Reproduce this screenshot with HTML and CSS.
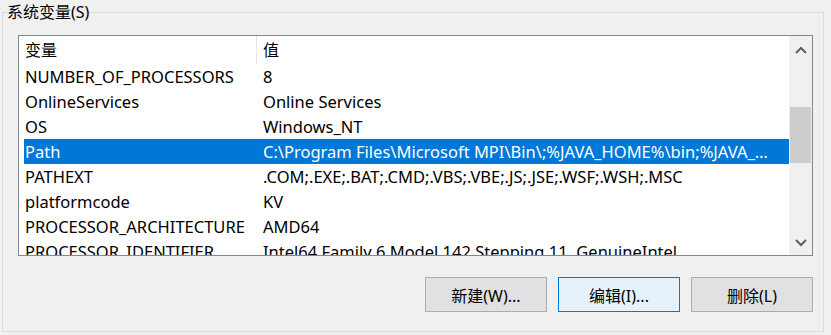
FILE: index.html
```html
<!DOCTYPE html>
<html lang="zh-CN">
<head>
<meta charset="utf-8">
<title>系统变量</title>
<link rel="stylesheet" href="styles.css">
</head>
<body>
<fieldset class="group">
  <legend class="group-title">系统变量(S)</legend>
  <div class="listbox">
    <div class="list">
      <div class="row header">
        <div class="c1">变量</div>
        <div class="c2">值</div>
      </div>
      <div class="row"><div class="c1">NUMBER_OF_PROCESSORS</div><div class="c2">8</div></div>
      <div class="row"><div class="c1">OnlineServices</div><div class="c2">Online Services</div></div>
      <div class="row"><div class="c1">OS</div><div class="c2">Windows_NT</div></div>
      <div class="row selected"><div class="c1">Path</div><div class="c2">C:\Program Files\Microsoft MPI\Bin\;%JAVA_HOME%\bin;%JAVA_HOME%\jre\bin;C:\Windows\system32</div></div>
      <div class="row"><div class="c1">PATHEXT</div><div class="c2">.COM;.EXE;.BAT;.CMD;.VBS;.VBE;.JS;.JSE;.WSF;.WSH;.MSC</div></div>
      <div class="row"><div class="c1">platformcode</div><div class="c2">KV</div></div>
      <div class="row"><div class="c1">PROCESSOR_ARCHITECTURE</div><div class="c2">AMD64</div></div>
      <div class="row"><div class="c1">PROCESSOR_IDENTIFIER</div><div class="c2">Intel64 Family 6 Model 142 Stepping 11, GenuineIntel</div></div>
    </div>
    <div class="scrollbar">
      <div class="arrow">
        <svg width="12" height="8" viewBox="0 0 12 8"><path d="M1 7 L6 2 L11 7" fill="none" stroke="#606060" stroke-width="2"/></svg>
      </div>
      <div class="track">
        <div class="thumb"></div>
      </div>
      <div class="arrow">
        <svg width="12" height="8" viewBox="0 0 12 8"><path d="M1 1 L6 6 L11 1" fill="none" stroke="#606060" stroke-width="2"/></svg>
      </div>
    </div>
  </div>
  <div class="buttons">
    <button class="btn">新建(W)...</button>
    <button class="btn default">编辑(I)...</button>
    <button class="btn">删除(L)</button>
  </div>
</fieldset>
</body>
</html>
```

FILE: styles.css
```css
* { box-sizing: border-box; }
html, body {
  margin: 0;
  padding: 0;
  background: #f0f0f0;
  width: 831px;
  height: 335px;
  overflow: hidden;
  font-family: "Noto Sans", "Noto Sans CJK SC", sans-serif;
  font-size: 16.5px;
  color: #000;
}
.group {
  margin: 0 7px 0 2px;
  padding: 0;
  border: 1px solid #dcdcdc;
  height: 332px;
  min-width: 0;
}
.group-title {
  margin-left: 4px;
  padding: 0;
  line-height: 24px;
  height: 24px;
  font-size: 16px;
  color: #000;
}
.listbox {
  margin: 11px 0 0 15px;
  width: 795px;
  height: 221px;
  border: 1px solid #828790;
  background: #fff;
  display: flex;
  overflow: hidden;
}
.list {
  flex: 1;
  min-width: 0;
  padding-left: 5px;
  overflow: hidden;
}
.row {
  display: flex;
  height: 25px;
  line-height: 25px;
  white-space: nowrap;
}
.row.header {
  height: 28px;
  line-height: 28px;
  font-size: 16px;
}
.c1 {
  width: 232px;
  flex: none;
  padding-left: 1px;
  overflow: hidden;
}
.c2 {
  flex: 1;
  min-width: 0;
  padding-left: 7px;
  padding-right: 14px;
  overflow: hidden;
  text-overflow: ellipsis;
}
.row.header .c2 {
  border-left: 1px solid #e5e5e5;
  padding-left: 6px;
}
.row.selected {
  background: #0078d7;
  color: #fff;
}
.scrollbar {
  width: 23px;
  flex: none;
  background: #f0f0f0;
  display: flex;
  flex-direction: column;
  padding: 2px 1px 0 1px;
}
.arrow {
  height: 24px;
  display: flex;
  align-items: center;
  justify-content: center;
  flex: none;
}
.track {
  flex: 1;
  padding-top: 45px;
}
.thumb {
  height: 56px;
  background: #cdcdcd;
}
.buttons {
  display: flex;
  justify-content: flex-end;
  gap: 11px;
  margin: 21px 0 0 15px;
  width: 795px;
}
.btn {
  width: 122px;
  height: 35px;
  font-family: inherit;
  font-size: 16px;
  color: #000;
  background: #e1e1e1;
  border: 1px solid #adadad;
  padding: 0;
  margin: 0;
}
.btn.default {
  background: #e5f1fb;
  border-color: #0078d7;
}
```
